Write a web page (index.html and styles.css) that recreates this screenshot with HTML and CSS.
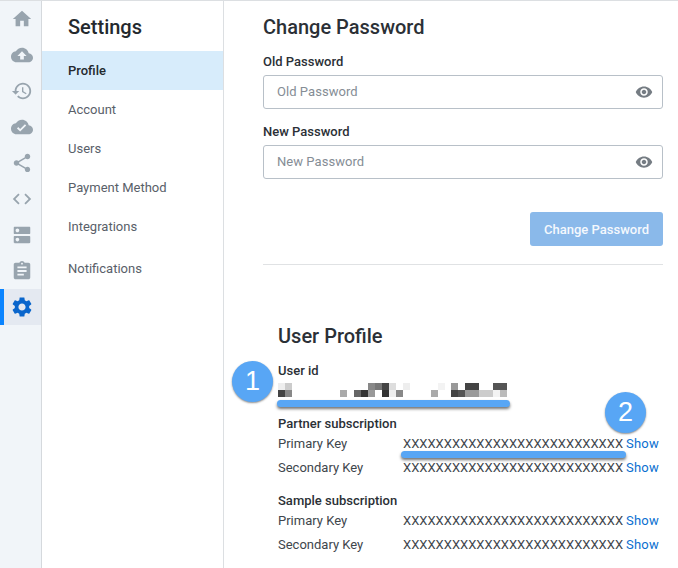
FILE: index.html
```html
<!DOCTYPE html>
<html lang="en">
<head>
    <meta charset="UTF-8">
    <meta name="viewport" content="width=device-width, initial-scale=1.0">
    <title>Settings</title>
    <link rel="stylesheet" href="styles.css">
</head>
<body>
    <div class="app">
        <nav class="rail">
            <a class="rail-item"><svg viewBox="0 0 24 24"><path d="M10 20v-6h4v6h5v-8h3L12 3 2 12h3v8z"/></svg></a>
            <a class="rail-item"><svg viewBox="0 0 24 24"><path d="M19.35 10.04C18.67 6.59 15.64 4 12 4 9.11 4 6.6 5.64 5.35 8.04 2.34 8.36 0 10.91 0 14c0 3.31 2.69 6 6 6h13c2.76 0 5-2.24 5-5 0-2.64-2.05-4.78-4.65-4.96zM14 13v4h-4v-4H7l5-5 5 5h-3z"/></svg></a>
            <a class="rail-item"><svg viewBox="0 0 24 24"><path d="M13 3c-4.97 0-9 4.03-9 9H1l3.89 3.89.07.14L9 12H6c0-3.87 3.13-7 7-7s7 3.13 7 7-3.13 7-7 7c-1.93 0-3.68-.79-4.94-2.06l-1.42 1.42C8.27 19.99 10.51 21 13 21c4.97 0 9-4.03 9-9s-4.03-9-9-9zm-1 5v5l4.28 2.54.72-1.21-3.5-2.08V8H12z"/></svg></a>
            <a class="rail-item"><svg viewBox="0 0 24 24"><path d="M19.35 10.04C18.67 6.59 15.64 4 12 4 9.11 4 6.6 5.64 5.35 8.04 2.34 8.36 0 10.91 0 14c0 3.31 2.69 6 6 6h13c2.76 0 5-2.24 5-5 0-2.64-2.05-4.78-4.65-4.96zM10 17l-3.5-3.5 1.41-1.41L10 14.17 15.18 9l1.41 1.41L10 17z"/></svg></a>
            <a class="rail-item"><svg viewBox="0 0 24 24"><path d="M18 16.08c-.76 0-1.44.3-1.96.77L8.91 12.7c.05-.23.09-.46.09-.7s-.04-.47-.09-.7l7.05-4.11c.54.5 1.25.81 2.04.81 1.66 0 3-1.34 3-3s-1.34-3-3-3-3 1.34-3 3c0 .24.04.47.09.7L8.04 9.81C7.5 9.31 6.79 9 6 9c-1.66 0-3 1.34-3 3s1.34 3 3 3c.79 0 1.5-.31 2.04-.81l7.12 4.16c-.05.21-.08.43-.08.65 0 1.61 1.31 2.92 2.92 2.92 1.61 0 2.92-1.31 2.92-2.92s-1.31-2.92-2.92-2.92z"/></svg></a>
            <a class="rail-item"><svg viewBox="0 0 24 24"><path d="M9.4 16.6L4.8 12l4.6-4.6L8 6l-6 6 6 6 1.4-1.4zm5.2 0l4.6-4.6-4.6-4.6L16 6l6 6-6 6-1.4-1.4z"/></svg></a>
            <a class="rail-item"><svg viewBox="0 0 24 24"><path d="M20 13H4c-.55 0-1 .45-1 1v6c0 .55.45 1 1 1h16c.55 0 1-.45 1-1v-6c0-.55-.45-1-1-1zM7 19c-1.1 0-2-.9-2-2s.9-2 2-2 2 .9 2 2-.9 2-2 2zM20 3H4c-.55 0-1 .45-1 1v6c0 .55.45 1 1 1h16c.55 0 1-.45 1-1V4c0-.55-.45-1-1-1zM7 9c-1.1 0-2-.9-2-2s.9-2 2-2 2 .9 2 2-.9 2-2 2z"/></svg></a>
            <a class="rail-item"><svg viewBox="0 0 24 24"><path d="M19 3h-4.18C14.4 1.84 13.3 1 12 1c-1.3 0-2.4.84-2.82 2H5c-1.1 0-2 .9-2 2v14c0 1.1.9 2 2 2h14c1.1 0 2-.9 2-2V5c0-1.1-.9-2-2-2zm-7 0c.55 0 1 .45 1 1s-.45 1-1 1-1-.45-1-1 .45-1 1-1zm2 14H7v-2h7v2zm3-4H7v-2h10v2zm0-4H7V7h10v2z"/></svg></a>
            <a class="rail-item active"><svg viewBox="0 0 24 24"><path d="M19.14 12.94c.04-.3.06-.61.06-.94 0-.32-.02-.64-.07-.94l2.03-1.58c.18-.14.23-.41.12-.61l-1.92-3.32c-.12-.22-.37-.29-.59-.22l-2.39.96c-.5-.38-1.03-.7-1.62-.94l-.36-2.54c-.04-.24-.24-.41-.48-.41h-3.84c-.24 0-.43.17-.47.41l-.36 2.54c-.59.24-1.13.57-1.62.94l-2.39-.96c-.22-.08-.47 0-.59.22L2.74 8.87c-.12.21-.08.47.12.61l2.03 1.58c-.05.3-.09.63-.09.94s.02.64.07.94l-2.03 1.58c-.18.14-.23.41-.12.61l1.92 3.32c.12.22.37.29.59.22l2.39-.96c.5.38 1.03.7 1.62.94l.36 2.54c.05.24.24.41.48.41h3.84c.24 0 .44-.17.47-.41l.36-2.54c.59-.24 1.13-.56 1.62-.94l2.39.96c.22.08.47 0 .59-.22l1.92-3.32c.12-.22.07-.47-.12-.61l-2.01-1.58zM12 15.6c-1.98 0-3.6-1.62-3.6-3.6s1.62-3.6 3.6-3.6 3.6 1.62 3.6 3.6-1.62 3.6-3.6 3.6z"/></svg></a>
        </nav>

        <aside class="menu">
            <h2 class="menu-title">Settings</h2>
            <a class="menu-item selected">Profile</a>
            <a class="menu-item">Account</a>
            <a class="menu-item">Users</a>
            <a class="menu-item">Payment Method</a>
            <a class="menu-item">Integrations</a>
            <a class="menu-item last">Notifications</a>
        </aside>

        <main class="content">
            <h2 class="page-title">Change Password</h2>
            <div class="field">
                <label class="field-label">Old Password</label>
                <div class="input-wrap">
                    <input class="text-input" type="password" placeholder="Old Password">
                    <svg class="eye" viewBox="0 0 24 24"><path d="M12 4.5C7 4.5 2.73 7.61 1 12c1.73 4.39 6 7.5 11 7.5s9.27-3.11 11-7.5c-1.73-4.39-6-7.5-11-7.5zM12 17c-2.76 0-5-2.24-5-5s2.24-5 5-5 5 2.24 5 5-2.24 5-5 5zm0-8c-1.66 0-3 1.34-3 3s1.34 3 3 3 3-1.34 3-3-1.34-3-3-3z"/></svg>
                </div>
            </div>
            <div class="field">
                <label class="field-label">New Password</label>
                <div class="input-wrap">
                    <input class="text-input" type="password" placeholder="New Password">
                    <svg class="eye" viewBox="0 0 24 24"><path d="M12 4.5C7 4.5 2.73 7.61 1 12c1.73 4.39 6 7.5 11 7.5s9.27-3.11 11-7.5c-1.73-4.39-6-7.5-11-7.5zM12 17c-2.76 0-5-2.24-5-5s2.24-5 5-5 5 2.24 5 5-2.24 5-5 5zm0-8c-1.66 0-3 1.34-3 3s1.34 3 3 3 3-1.34 3-3-1.34-3-3-3z"/></svg>
                </div>
            </div>
            <div class="actions">
                <button class="btn" disabled>Change Password</button>
            </div>
            <hr class="divider">

            <section class="profile">
                <h2 class="profile-title">User Profile</h2>
                <div class="group-title user">User id</div>
                <svg class="pixels" viewBox="0 0 33 2" preserveAspectRatio="none" shape-rendering="crispEdges">
                    <rect x="0" y="0" width="1" height="1" fill="#eee"/>
                    <rect x="1" y="0" width="1" height="1" fill="#ccc"/>
                    <rect x="0" y="1" width="1" height="1" fill="#444"/>
                    <rect x="1" y="1" width="1" height="1" fill="#888"/>
                    <rect x="9" y="1" width="1" height="1" fill="#aaa"/>
                    <rect x="11" y="1" width="1" height="1" fill="#666"/>
                    <rect x="12" y="1" width="1" height="1" fill="#333"/>
                    <rect x="13" y="1" width="1" height="1" fill="#999"/>
                    <rect x="13" y="0" width="1" height="1" fill="#888"/>
                    <rect x="14" y="0" width="1" height="1" fill="#777"/>
                    <rect x="15" y="0" width="1" height="1" fill="#444"/>
                    <rect x="16" y="0" width="1" height="1" fill="#ddd"/>
                    <rect x="18" y="0" width="1" height="1" fill="#eee"/>
                    <rect x="15" y="1" width="1" height="1" fill="#333"/>
                    <rect x="16" y="1" width="1" height="1" fill="#eee"/>
                    <rect x="17" y="1" width="1" height="1" fill="#888"/>
                    <rect x="22" y="1" width="1" height="1" fill="#aaa"/>
                    <rect x="23" y="0" width="1" height="1" fill="#f3f3f3"/>
                    <rect x="25" y="0" width="1" height="1" fill="#999"/>
                    <rect x="27" y="0" width="2" height="1" fill="#444"/>
                    <rect x="31" y="0" width="2" height="1" fill="#555"/>
                    <rect x="25" y="1" width="1" height="1" fill="#444"/>
                    <rect x="26" y="1" width="1" height="1" fill="#555"/>
                    <rect x="27" y="1" width="2" height="1" fill="#999"/>
                    <rect x="29" y="1" width="2" height="1" fill="#ccc"/>
                    <rect x="31" y="1" width="1" height="1" fill="#f3f3f3"/>
                    <rect x="32" y="1" width="1" height="1" fill="#bbb"/>
                </svg>

                <div class="group-title partner">Partner subscription</div>
                <div class="key-row">
                    <span class="key-name">Primary Key</span>
                    <span class="key-value">XXXXXXXXXXXXXXXXXXXXXXXXXXX</span>
                    <a class="show">Show</a>
                </div>
                <div class="key-row">
                    <span class="key-name">Secondary Key</span>
                    <span class="key-value">XXXXXXXXXXXXXXXXXXXXXXXXXXX</span>
                    <a class="show">Show</a>
                </div>

                <div class="group-title sample">Sample subscription</div>
                <div class="key-row">
                    <span class="key-name">Primary Key</span>
                    <span class="key-value">XXXXXXXXXXXXXXXXXXXXXXXXXXX</span>
                    <a class="show">Show</a>
                </div>
                <div class="key-row">
                    <span class="key-name">Secondary Key</span>
                    <span class="key-value">XXXXXXXXXXXXXXXXXXXXXXXXXXX</span>
                    <a class="show">Show</a>
                </div>
            </section>
        </main>
    </div>

    <!-- annotations drawn over the screenshot -->
    <div class="badge badge-one">1</div>
    <div class="badge badge-two">2</div>
    <div class="underline underline-one"></div>
    <div class="underline underline-two"></div>
</body>
</html>
```

FILE: styles.css
```css
html, body {
    margin: 0;
    padding: 0;
    height: 568px;
    overflow: hidden;
    background-color: #fff;
    font-family: Roboto, Arial, sans-serif;
    color: #24292e;
}
.app {
    display: flex;
    height: 567px;
    border-top: 1px solid #dcdfe2;
}
.rail {
    width: 41px;
    flex: none;
    background-color: #f1f5f9;
    border-right: 1px solid #d5d9dd;
    display: flex;
    flex-direction: column;
}
.rail-item {
    height: 36px;
    display: flex;
    align-items: center;
    justify-content: center;
    padding-left: 2px;
}
.rail-item svg {
    width: 22px;
    height: 22px;
    fill: #98a4ae;
}
.rail-item.active {
    background-color: #e4e9f1;
    border-left: 4px solid #0a84ff;
    padding-left: 0;
    padding-right: 1px;
}
.rail-item.active svg {
    width: 24px;
    height: 24px;
    fill: #0a66cc;
}
.menu {
    width: 181px;
    flex: none;
    border-right: 1px solid #dcdfe2;
}
.menu-title {
    margin: 0;
    padding: 14px 0 0 26px;
    height: 36px;
    font-size: 20px;
    line-height: 24px;
    font-weight: 500;
}
.menu-item {
    display: block;
    height: 39px;
    line-height: 39px;
    padding-left: 26px;
    font-size: 13px;
    color: #596069;
}
.menu-item.selected {
    background-color: #d7ecfb;
    color: #24292e;
    font-weight: 500;
}
.menu-item.last {
    margin-top: 3px;
}
.content {
    flex: 1;
    padding: 14px 15px 0 39px;
    min-width: 0;
}
.page-title {
    margin: 0;
    height: 24px;
    font-size: 20px;
    line-height: 24px;
    font-weight: 500;
    color: #2b3036;
}
.field {
    margin-top: 15px;
}
.field-label {
    display: block;
    font-size: 13px;
    line-height: 16px;
    font-weight: 500;
    color: #2b3036;
}
.input-wrap {
    position: relative;
    margin-top: 5px;
}
.text-input {
    display: block;
    box-sizing: border-box;
    width: 100%;
    height: 34px;
    padding: 0 13px 2px;
    border: 1px solid #b8c0c8;
    border-radius: 3px;
    font-family: Roboto, Arial, sans-serif;
    font-size: 13px;
    letter-spacing: 0.05px;
    background: #fff;
}
.text-input::placeholder {
    color: #858d95;
    opacity: 1;
}
.eye {
    position: absolute;
    right: 10px;
    top: 8px;
    width: 18px;
    height: 18px;
    fill: #757c83;
}
.actions {
    display: flex;
    justify-content: flex-end;
    margin-top: 33px;
}
.btn {
    height: 34px;
    width: 133px;
    border: none;
    border-radius: 3px;
    background-color: #8ab9ea;
    color: #f4f8fd;
    font-family: Roboto, Arial, sans-serif;
    font-size: 13px;
    font-weight: 500;
    padding: 0;
}
.divider {
    border: none;
    border-top: 1px solid #e0e2e4;
    margin: 18px 0 0;
}
.profile {
    padding-left: 15px;
}
.profile-title {
    margin: 59px 0 0;
    height: 24px;
    font-size: 20px;
    line-height: 24px;
    font-weight: 500;
    color: #2b3036;
}
.group-title {
    font-size: 13px;
    line-height: 14px;
    font-weight: 500;
    color: #2b3036;
}
.group-title.user {
    margin-top: 16px;
}
.group-title.partner {
    margin-top: 20px;
}
.group-title.sample {
    margin-top: 15px;
}
.pixels {
    display: block;
    margin-top: 5px;
    width: 229px;
    height: 14px;
}
.key-row {
    display: flex;
    align-items: center;
    height: 24px;
    font-size: 13px;
    color: #40464c;
}
.key-name {
    width: 125px;
    flex: none;
}
.key-value {
    width: 223px;
    flex: none;
    white-space: nowrap;
}
.show {
    color: #0a6fd0;
    letter-spacing: 0.2px;
}
.badge {
    position: absolute;
    width: 41px;
    height: 41px;
    border-radius: 50%;
    background-color: #58a6f5;
    box-shadow: 0 1px 2px rgba(0, 0, 0, 0.45);
    color: #fff;
    font-family: "Liberation Sans", Arial, sans-serif;
    font-size: 27px;
    line-height: 41px;
    text-align: center;
}
.badge-one {
    left: 232px;
    top: 361px;
}
.badge-two {
    left: 605px;
    top: 392px;
}
.underline {
    position: absolute;
    height: 7px;
    border-radius: 4px;
    background-color: #58a6f5;
    box-shadow: 0 2px 3px rgba(0, 0, 0, 0.55);
}
.underline-one {
    left: 277px;
    top: 400px;
    width: 233px;
}
.underline-two {
    left: 401px;
    top: 451px;
    width: 225px;
}
```
